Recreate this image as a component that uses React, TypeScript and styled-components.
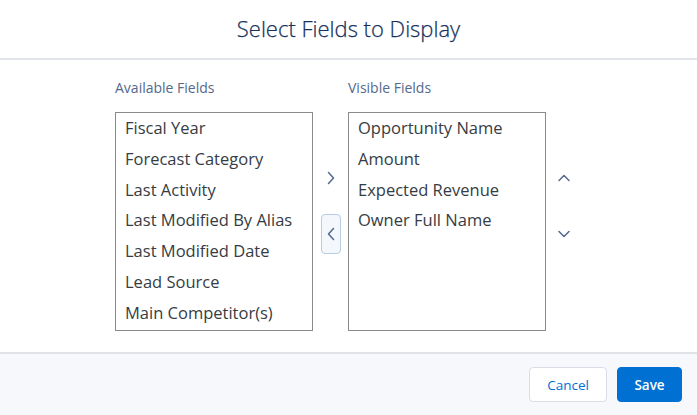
import React from 'react';
import styled, { createGlobalStyle } from 'styled-components';

const GlobalStyle = createGlobalStyle`
  html, body {
    margin: 0;
    padding: 0;
    background: #ffffff;
    font-family: "Open Sans", "Liberation Sans", sans-serif;
    color: #16325c;
  }
`;

const Modal = styled.div`
  width: 697px;
  height: 415px;
  display: flex;
  flex-direction: column;
  background: #ffffff;
`;

const Header = styled.header`
  height: 60px;
  display: flex;
  align-items: center;
  justify-content: center;
  border-bottom: 2px solid #e1e4ea;
  box-sizing: border-box;
`;

const Title = styled.h2`
  margin: 0 0 2px;
  font-size: 22px;
  font-weight: 300;
  color: #16325c;
  -webkit-text-stroke: 0.25px #16325c;
`;

const Body = styled.main`
  flex: 1;
  display: flex;
  justify-content: center;
  align-items: center;
  padding: 0 1px 1px 0;
`;

const Picker = styled.div`
  display: flex;
  align-items: center;
`;

const Column = styled.div`
  display: flex;
  flex-direction: column;
`;

const Label = styled.span`
  font-size: 14px;
  color: #54698d;
  line-height: 16px;
  margin-bottom: 16px;
`;

const ListBox = styled.ul`
  list-style: none;
  margin: 0;
  padding: 0;
  width: 198px;
  height: 219px;
  box-sizing: border-box;
  border: 1px solid #8a8a8a;
  background: #ffffff;
  overflow: hidden;
`;

const Option = styled.li`
  padding: 0 9px;
  font-size: 16.5px;
  line-height: 30.8px;
  color: #363c44;
  white-space: nowrap;
`;

const Arrows = styled.div`
  width: 35px;
  display: flex;
  flex-direction: column;
  align-items: center;
  gap: 16px;
`;

const ArrowButton = styled.button<{ $focused?: boolean }>`
  width: 20px;
  height: 40px;
  padding: 0;
  display: flex;
  align-items: center;
  justify-content: center;
  border-radius: 4px;
  border: 1px solid ${p => (p.$focused ? '#b5cde6' : 'transparent')};
  background: ${p => (p.$focused ? '#f4f7fb' : 'transparent')};
  cursor: pointer;
`;

const Footer = styled.footer`
  height: 63px;
  box-sizing: border-box;
  border-top: 2px solid #dfe2e7;
  background: #f7f8fb;
  display: flex;
  justify-content: flex-end;
  align-items: flex-start;
  gap: 10px;
  padding: 13px 15px 0 0;
`;

const Button = styled.button<{ $brand?: boolean }>`
  height: 35px;
  width: ${p => (p.$brand ? '65px' : '78px')};
  padding: 0;
  border-radius: 4px;
  font-family: "Open Sans", "Liberation Sans", sans-serif;
  font-size: 13.5px;
  font-weight: ${p => (p.$brand ? 600 : 400)};
  border: 1px solid ${p => (p.$brand ? '#0070d2' : '#d8dde6')};
  background: ${p => (p.$brand ? '#0070d2' : '#ffffff')};
  color: ${p => (p.$brand ? '#ffffff' : '#0070d2')};
  cursor: pointer;
`;

type Dir = 'left' | 'right' | 'up' | 'down';

const paths: Record<Dir, string> = {
  right: 'M1.5 1.5 L6.5 7 L1.5 12.5',
  left: 'M6.5 1.5 L1.5 7 L6.5 12.5',
  up: 'M1 6.5 L6 1.5 L11 6.5',
  down: 'M1 1.5 L6 6.5 L11 1.5',
};

const Chevron: React.FC<{ dir: Dir }> = ({ dir }) => {
  const vertical = dir === 'up' || dir === 'down';
  const w = vertical ? 12 : 8;
  const h = vertical ? 8 : 14;
  return (
    <svg width={w} height={h} viewBox={`0 0 ${w} ${h}`} fill="none">
      <path d={paths[dir]} stroke="#54698d" strokeWidth="1.5" strokeLinecap="round" strokeLinejoin="round" />
    </svg>
  );
};

const available = [
  'Fiscal Year',
  'Forecast Category',
  'Last Activity',
  'Last Modified By Alias',
  'Last Modified Date',
  'Lead Source',
  'Main Competitor(s)',
];

const visible = ['Opportunity Name', 'Amount', 'Expected Revenue', 'Owner Full Name'];

const App: React.FC = () => {
  return (
    <>
      <GlobalStyle />
      <Modal>
        <Header>
          <Title>Select Fields to Display</Title>
        </Header>
        <Body>
          <Picker>
            <Column>
              <Label>Available Fields</Label>
              <ListBox>
                {available.map(f => (
                  <Option key={f}>{f}</Option>
                ))}
              </ListBox>
            </Column>
            <Arrows>
              <ArrowButton aria-label="Move to Visible">
                <Chevron dir="right" />
              </ArrowButton>
              <ArrowButton $focused aria-label="Move to Available">
                <Chevron dir="left" />
              </ArrowButton>
            </Arrows>
            <Column>
              <Label>Visible Fields</Label>
              <ListBox>
                {visible.map(f => (
                  <Option key={f}>{f}</Option>
                ))}
              </ListBox>
            </Column>
            <Arrows>
              <ArrowButton aria-label="Move up">
                <Chevron dir="up" />
              </ArrowButton>
              <ArrowButton aria-label="Move down">
                <Chevron dir="down" />
              </ArrowButton>
            </Arrows>
          </Picker>
        </Body>
        <Footer>
          <Button>Cancel</Button>
          <Button $brand>Save</Button>
        </Footer>
      </Modal>
    </>
  );
};

export default App;
